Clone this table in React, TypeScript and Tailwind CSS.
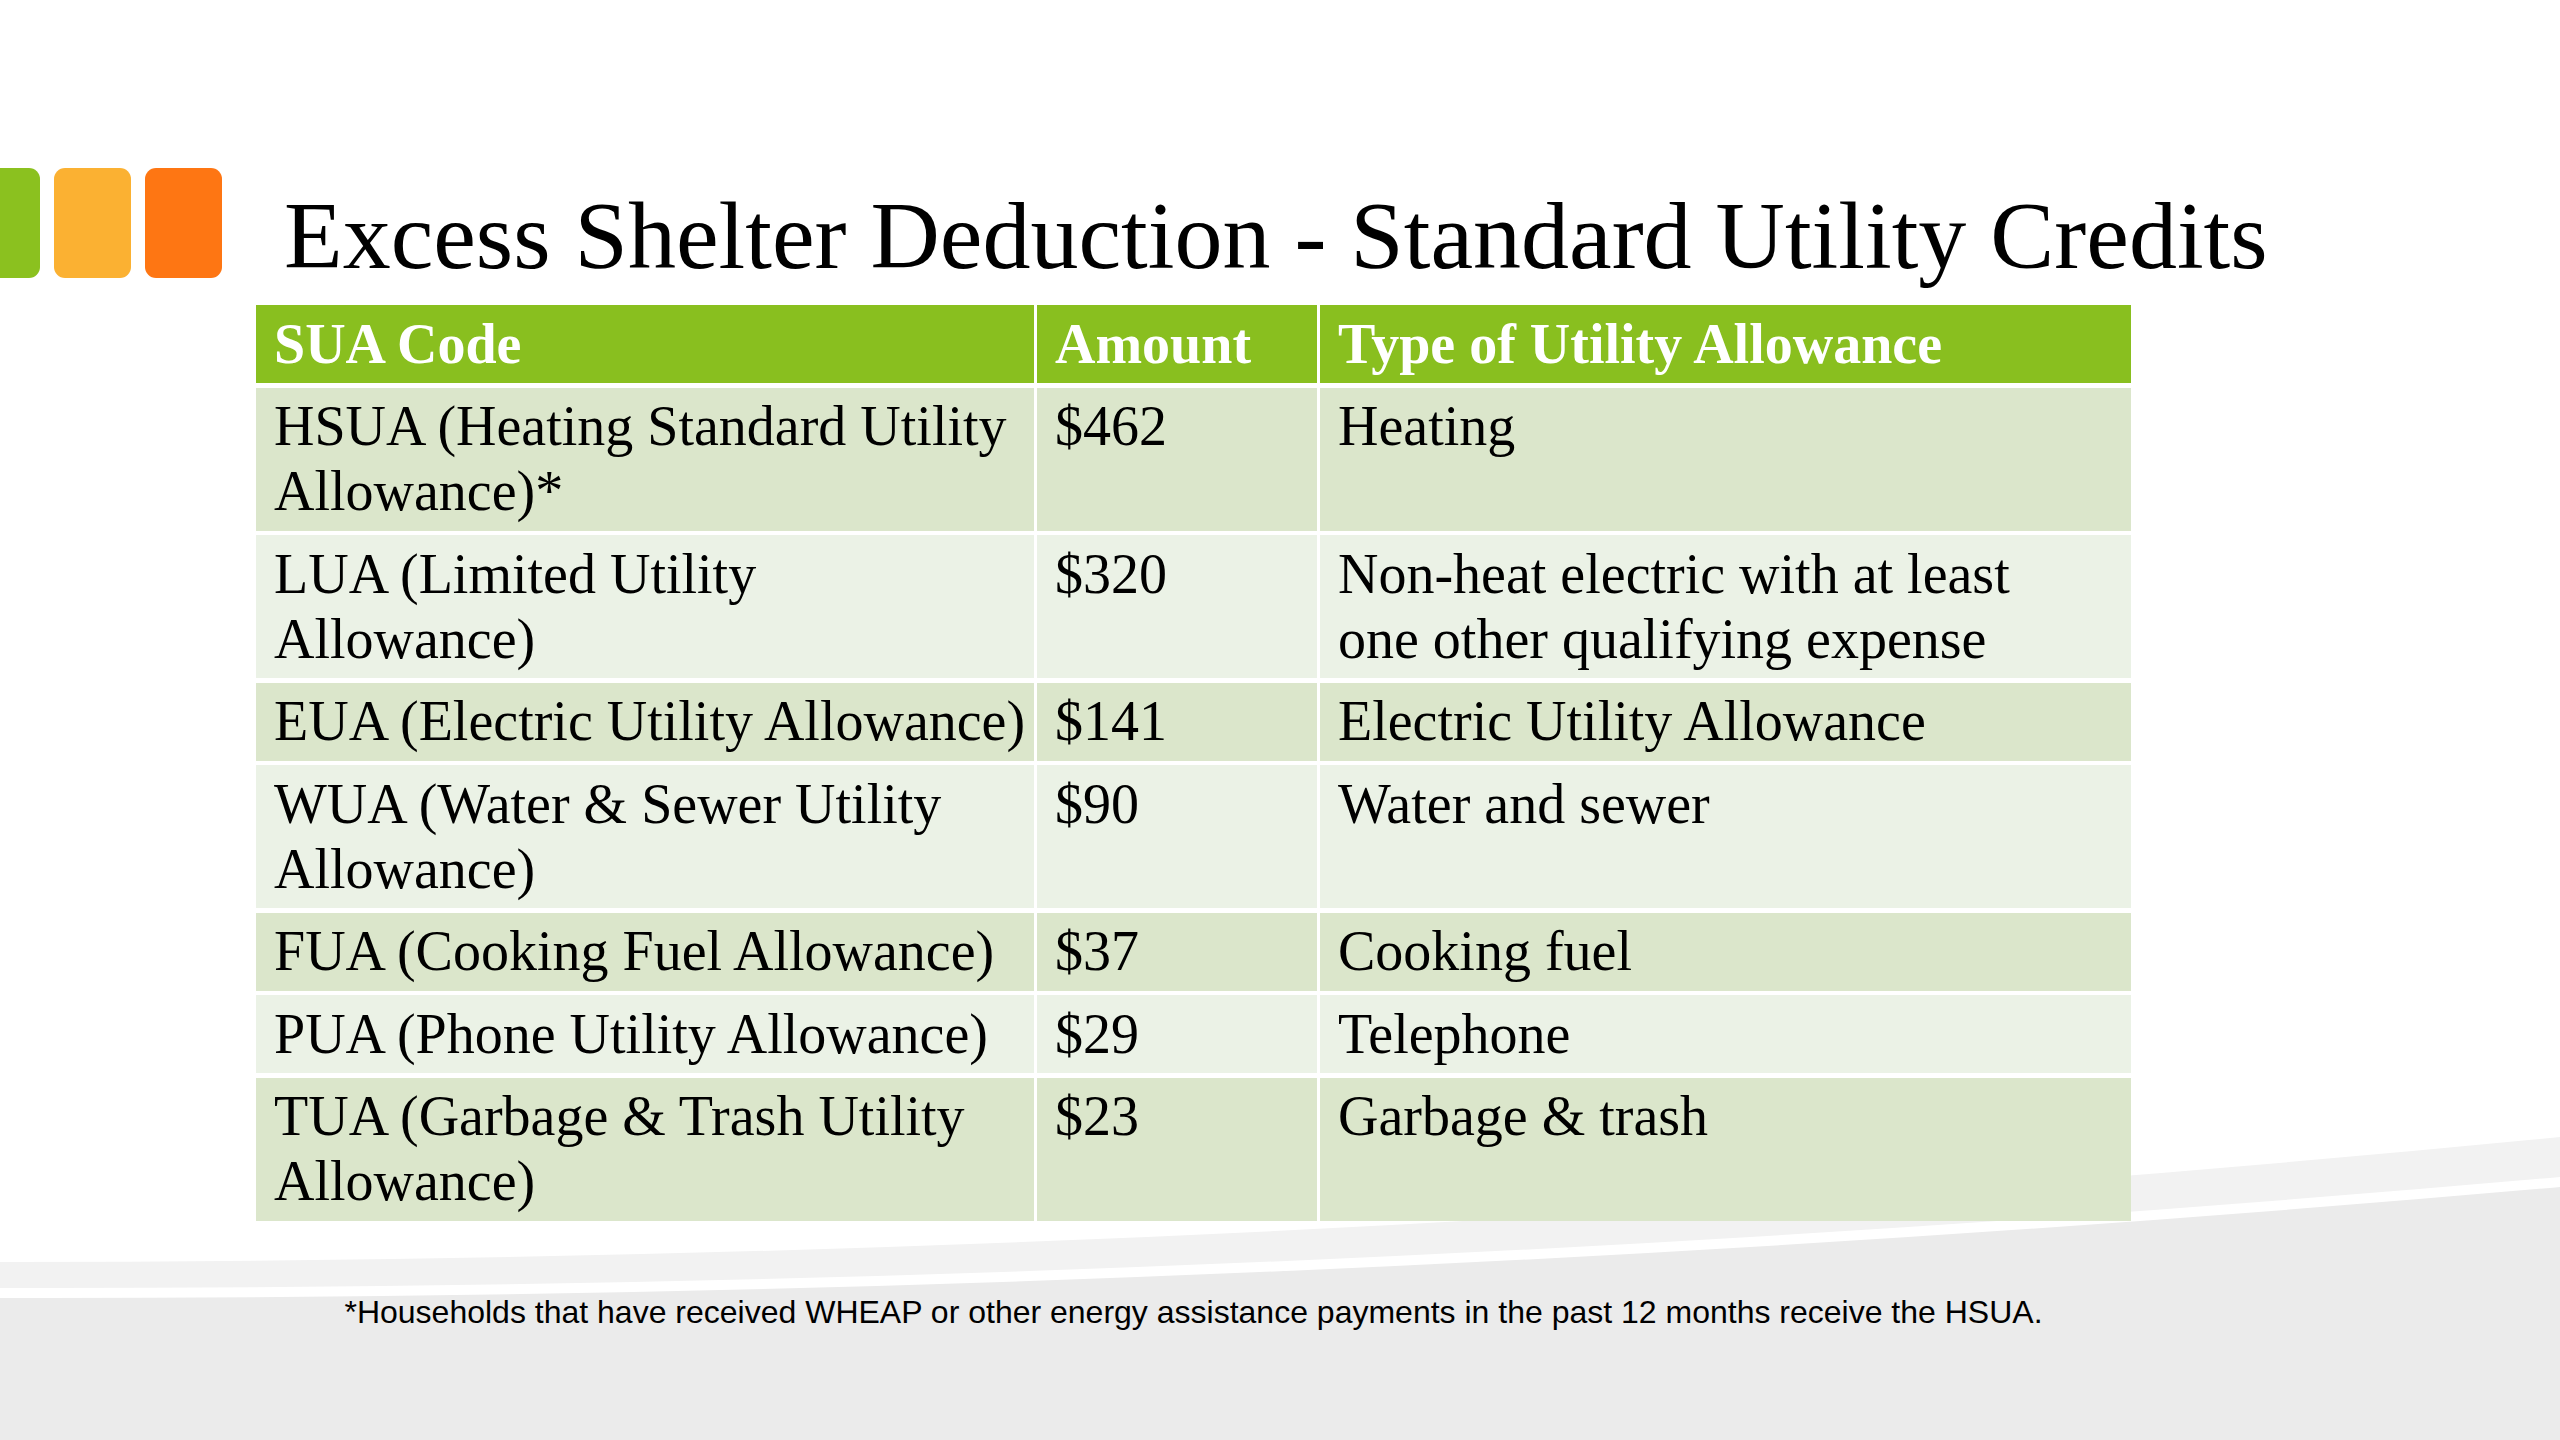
import React from 'react';

const rows = [
  { code: ['HSUA (Heating Standard Utility', 'Allowance)*'], amount: '$462', type: ['Heating'] },
  { code: ['LUA (Limited Utility', 'Allowance)'], amount: '$320', type: ['Non-heat electric with at least', 'one other qualifying expense'] },
  { code: ['EUA (Electric Utility Allowance)'], amount: '$141', type: ['Electric Utility Allowance'] },
  { code: ['WUA (Water & Sewer Utility', 'Allowance)'], amount: '$90', type: ['Water and sewer'] },
  { code: ['FUA (Cooking Fuel Allowance)'], amount: '$37', type: ['Cooking fuel'] },
  { code: ['PUA (Phone Utility Allowance)'], amount: '$29', type: ['Telephone'] },
  { code: ['TUA (Garbage & Trash Utility', 'Allowance)'], amount: '$23', type: ['Garbage & trash'] },
];

const Lines: React.FC<{ lines: string[] }> = ({ lines }) => (
  <>
    {lines.map((l, i) => (
      <div key={i} className="whitespace-nowrap">{l}</div>
    ))}
  </>
);

const App: React.FC = () => {
  return (
    <div className="relative w-[2560px] h-[1440px] overflow-hidden bg-white">
      {/* background swoosh */}
      <svg className="absolute inset-0 w-full h-full" viewBox="0 0 2560 1440" preserveAspectRatio="none">
        <path d="M0 1262 Q1280 1262 2560 1137 L2560 1440 L0 1440 Z" fill="#f2f2f2" />
        <path d="M0 1288 Q1280 1290 2560 1177 L2560 1440 L0 1440 Z" fill="#ffffff" />
        <path d="M0 1298 Q1280 1300 2560 1187 L2560 1440 L0 1440 Z" fill="#ebebeb" />
      </svg>

      <div className="relative flex flex-col font-['Liberation_Serif','DejaVu_Serif',serif] text-black">
        <div className="flex items-start pt-[168px]">
          <div className="flex gap-[14px] ml-[-37px]">
            <div className="w-[77px] h-[110px] rounded-[11px] bg-[#8bc11f]" />
            <div className="w-[77px] h-[110px] rounded-[11px] bg-[#fbb132]" />
            <div className="w-[77px] h-[110px] rounded-[11px] bg-[#fe7613]" />
          </div>
          <h1 className="ml-[62px] mt-[13px] text-[96px] leading-[110px] font-normal whitespace-nowrap">
            Excess Shelter Deduction - Standard Utility Credits
          </h1>
        </div>

        <div className="ml-[256px] mt-[14px] w-[1875px] grid grid-cols-[778px_280px_811px] gap-x-[3px] gap-y-[4.5px] bg-white text-[56px] leading-[65px]">
          <div className="bg-[#89bf1f] text-white font-bold pl-[18px] py-[6.5px]">SUA Code</div>
          <div className="bg-[#89bf1f] text-white font-bold pl-[18px] py-[6.5px]">Amount</div>
          <div className="bg-[#89bf1f] text-white font-bold pl-[18px] py-[6.5px]">Type of Utility Allowance</div>
          {rows.map((r, i) => {
            const bg = i % 2 === 0 ? 'bg-[#dbe6cb]' : 'bg-[#ebf2e6]';
            return (
              <React.Fragment key={i}>
                <div className={`${bg} pl-[18px] py-[6.5px]`}>
                  <Lines lines={r.code} />
                </div>
                <div className={`${bg} pl-[18px] py-[6.5px]`}>{r.amount}</div>
                <div className={`${bg} pl-[18px] py-[6.5px]`}>
                  <Lines lines={r.type} />
                </div>
              </React.Fragment>
            );
          })}
        </div>

        <p className="ml-[256px] w-[1875px] mt-[73px] text-center font-['Liberation_Sans',Arial,sans-serif] text-[32px] leading-[37px] text-black whitespace-nowrap">
          *Households that have received WHEAP or other energy assistance payments in the past 12 months receive the HSUA.
        </p>
      </div>
    </div>
  );
};

export default App;
